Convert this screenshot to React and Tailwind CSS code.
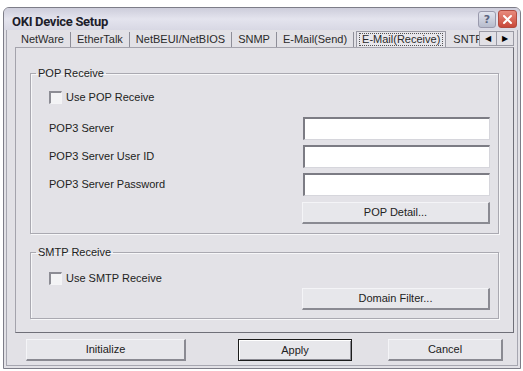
import React from 'react';

const font = "font-['Liberation_Sans',Arial,sans-serif]";

function Checkbox({ label }) {
  return (
    <div className="flex h-[13px] items-center">
      <span className="box-border h-[13px] w-[13px] border-t-2 border-l-2 border-b border-r border-t-[#8c8c94] border-l-[#8c8c94] border-b-[#f4f4f6] border-r-[#f4f4f6] bg-[#f3f3f5]" />
      <span className="ml-[4px] leading-[13px] text-[#222]">{label}</span>
    </div>
  );
}

function Field() {
  return (
    <div className="box-border h-[23px] w-[187px] border-t-2 border-l-2 border-b border-r border-t-[#7c7c84] border-l-[#7c7c84] border-b-[#d6d6dc] border-r-[#d6d6dc] bg-white" />
  );
}

function Button({ children, className = '', isDefault = false }) {
  return (
    <div
      className={
        'box-border flex h-[22px] items-center justify-center text-[#222] ' +
        (isDefault
          ? 'border border-[#1c1c1c] bg-[#e7e7eb] shadow-[inset_1px_1px_0_#fff,inset_-1px_-1px_0_#8a8a92] '
          : 'border-t border-l border-b-2 border-r-2 border-t-[#f4f4f7] border-l-[#f4f4f7] border-b-[#8a8a92] border-r-[#8a8a92] bg-[#e7e7eb] ') +
        className
      }
    >
      {children}
    </div>
  );
}

function Group({ title, children, className = '' }) {
  return (
    <fieldset
      className={
        'box-border border border-[#aaa9b1] px-[5px] shadow-[1px_1px_0_#f7f7f9,inset_1px_1px_0_#f7f7f9] ' +
        className
      }
    >
      <legend className="px-[2px] leading-[13px] text-[#222]">{title}</legend>
      {children}
    </fieldset>
  );
}

const tabs = ['NetWare', 'EtherTalk', 'NetBEUI/NetBIOS', 'SNMP', 'E-Mail(Send)'];

export default function App() {
  return (
    <div className={`${font} h-[371px] w-[523px] bg-white pt-[7px] pl-[3px] text-[11px]`}>
      <div className="box-border flex h-[362px] w-[518px] flex-col rounded-t-[6px] border border-[#7d7d88] bg-[#e2e1e6]">
        {/* title bar */}
        <div className="flex h-[22px] items-center rounded-t-[5px] bg-gradient-to-b from-[#cdcddb] via-[#e4e4ee] to-[#d8d8e4] pr-[3px] pl-[8px]">
          <span className="mt-[5px] flex-1 font-['Roboto',Arial,sans-serif] text-[13px] font-bold tracking-[-0.3px] text-[#1d1d2b]">
            OKI Device Setup
          </span>
          <div className="flex items-center gap-[2px]">
            <div className="flex h-[17px] w-[18px] items-center justify-center rounded-[3px] border border-[#9a9aad] bg-gradient-to-b from-[#e2e4ee] to-[#b7bccd] font-['DejaVu_Sans',sans-serif] text-[11px] font-bold leading-none text-[#5b6480]">
              ?
            </div>
            <div className="flex h-[18px] w-[19px] items-center justify-center rounded-[3px] border border-[#b04a40] bg-gradient-to-b from-[#e88a7c] to-[#c8463a]">
              <svg width="11" height="11" viewBox="0 0 11 11">
                <path d="M2 2 L9 9 M9 2 L2 9" stroke="#fff" strokeWidth="2" strokeLinecap="round" />
              </svg>
            </div>
          </div>
        </div>

        {/* body */}
        <div className="mx-[2px] mb-[2px] flex flex-1 flex-col border-x border-b border-[#a6a6b0] pr-[3px] pl-[8px]">
          {/* tab strip */}
          <div className="flex h-[17px] items-end">
            <div className="flex min-w-0 flex-1 items-end overflow-hidden">
              {tabs.map((t) => (
                <div
                  key={t}
                  className="flex h-[15px] shrink-0 items-center border-r border-[#8e8e98] px-[6px] text-[#2a2a2a]"
                >
                  {t}
                </div>
              ))}
              <div className="ml-[2px] flex h-[16px] shrink-0 items-center border-x border-t border-[#9a9aa4] bg-[#e8e7ec] px-[2px]">
                <span className="border border-dotted border-[#555] px-[2px] leading-[11px] text-[#2a2a2a]">
                  E-Mail(Receive)
                </span>
              </div>
              <div className="flex h-[15px] shrink-0 items-center pl-[7px] text-[#2a2a2a]">
                SNTP
              </div>
            </div>
            <div className="mb-[1px] flex h-[15px] w-[35px] shrink-0 bg-[#e2e1e6]">
              <div className="flex flex-1 items-center justify-center border border-[#9a9aa4] text-[8px] text-black">◀</div>
              <div className="flex flex-1 items-center justify-center border-y border-r border-[#9a9aa4] text-[8px] text-black">▶</div>
            </div>
          </div>

          {/* tab panel */}
          <div className="box-border border border-[#a4a3ac] border-r-[#6f6f78] border-b-[#6f6f78] bg-[#e3e2e7] px-[14px] pt-[19px] pb-[13px]">
            <Group title="POP Receive" className="pb-[9px]">
              <div className="pt-[11px] pr-[3px] pl-[13px]">
                <Checkbox label="Use POP Receive" />
                <div className="mt-[13px] flex flex-col gap-[5px] text-[#222]">
                  <div className="flex h-[23px] items-center justify-between">
                    <span>POP3 Server</span>
                    <Field />
                  </div>
                  <div className="flex h-[23px] items-center justify-between">
                    <span>POP3 Server User ID</span>
                    <Field />
                  </div>
                  <div className="flex h-[23px] items-center justify-between">
                    <span>POP3 Server Password</span>
                    <Field />
                  </div>
                </div>
                <div className="mt-[6px] flex justify-end">
                  <Button className="w-[188px]">POP Detail...</Button>
                </div>
              </div>
            </Group>

            <Group title="SMTP Receive" className="mt-[12px] pb-[8px]">
              <div className="pt-[13px] pr-[3px] pl-[13px]">
                <Checkbox label="Use SMTP Receive" />
                <div className="mt-[3px] flex justify-end">
                  <Button className="w-[188px]">Domain Filter...</Button>
                </div>
              </div>
            </Group>
          </div>

          {/* dialog buttons */}
          <div className="mt-[6px] flex pl-[11px]">
            <Button className="w-[160px]">Initialize</Button>
            <Button isDefault className="ml-[52px] w-[114px]">Apply</Button>
            <Button className="ml-[36px] w-[115px]">Cancel</Button>
          </div>
        </div>
      </div>
    </div>
  );
}
